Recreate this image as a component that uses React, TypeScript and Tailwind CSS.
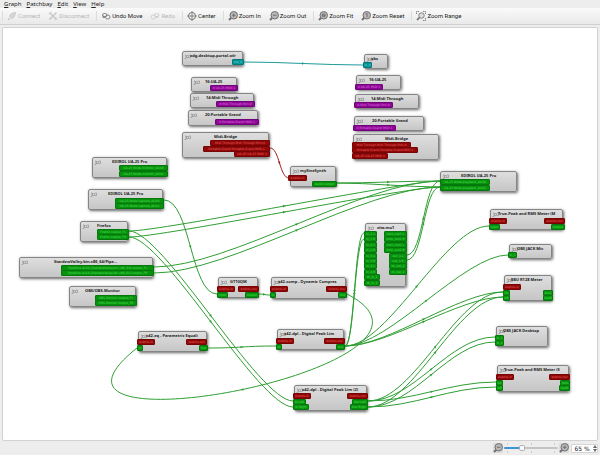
import React, { useState } from "react";

type Tone = "green" | "red" | "purple" | "teal";
type Port = [x: number, y: number, w: number, tone: Tone, label: string];
type GraphNode = {
  x: number;
  y: number;
  w: number;
  h: number;
  title: string;
  tx: number;
  ports: Port[];
};

const ORIGIN_X = 3;
const ORIGIN_Y = 28;

const toneClass: Record<Tone, string> = {
  green: "border-[#04780a] bg-[#08900e] text-[#4be050]",
  red: "border-[#780404] bg-[#900808] text-[#e86060]",
  purple: "border-[#70047a] bg-[#8c0892] text-[#e070e6]",
  teal: "border-[#04787a] bg-[#089092] text-[#60e0e0]",
};

const nodes: GraphNode[] = [
  { x: 182, y: 51, w: 61, h: 15, title: "xdg-desktop-portal-wlr", tx: 190, ports: [[232, 59, 12, "teal", "out_0"]] },
  { x: 364, y: 54, w: 24, h: 15, title: "obs", tx: 371, ports: [[363, 62, 9, "teal", "in_0"]] },
  { x: 191, y: 77, w: 46, h: 15, title: "16:UA-25", tx: 205, ports: [[210, 85, 28, "purple", "0:UA-25 MIDI 1"]] },
  { x: 190, y: 93, w: 64, h: 15, title: "14:Midi Through", tx: 206, ports: [[216, 101, 39, "purple", "0:Midi Through Port-0"]] },
  { x: 188, y: 110, w: 70, h: 16, title: "20:Portable Grand", tx: 205, ports: [[215, 119, 44, "purple", "0:Portable Grand MIDI 1"]] },
  {
    x: 182, y: 132, w: 87, h: 26, title: "Midi-Bridge", tx: 214,
    ports: [
      [210, 140, 60, "red", "Midi Through:Midi Through Port-0"],
      [203, 146, 67, "red", "Portable Grand:Portable Grand MIDI 1"],
      [234, 151, 36, "red", "UA-25:UA-25 MIDI 1"],
    ],
  },
  { x: 356, y: 75, w: 45, h: 15, title: "16:UA-25", tx: 369, ports: [[355, 84, 28, "purple", "0:UA-25 MIDI 1"]] },
  { x: 355, y: 94, w: 64, h: 15, title: "14:Midi Through", tx: 371, ports: [[354, 102, 39, "purple", "0:Midi Through Port-0"]] },
  { x: 354, y: 116, w: 70, h: 15, title: "20:Portable Grand", tx: 372, ports: [[353, 125, 43, "purple", "0:Portable Grand MIDI 1"]] },
  {
    x: 353, y: 134, w: 86, h: 26, title: "Midi-Bridge", tx: 385,
    ports: [
      [352, 142, 59, "red", "Midi Through:Midi Through Port-0"],
      [352, 147, 66, "red", "Portable Grand:Portable Grand MIDI 1"],
      [352, 153, 36, "red", "UA-25:UA-25 MIDI 1"],
    ],
  },
  {
    x: 440, y: 171, w: 77, h: 21, title: "EDIROL UA-25 Pro", tx: 461,
    ports: [
      [440, 179, 50, "green", "UA-25 Node:playback_AUX0"],
      [440, 185, 50, "green", "UA-25 Node:playback_AUX1"],
    ],
  },
  {
    x: 92, y: 157, w: 75, h: 21, title: "EDIROL UA-25 Pro", tx: 112,
    ports: [
      [119, 165, 49, "green", "UA-25 Node:monitor_AUX0"],
      [119, 171, 49, "green", "UA-25 Node:monitor_AUX1"],
    ],
  },
  {
    x: 88, y: 189, w: 75, h: 21, title: "EDIROL UA-25 Pro", tx: 108,
    ports: [
      [115, 198, 49, "green", "UA-25 Node:capture_AUX0"],
      [115, 203, 49, "green", "UA-25 Node:capture_AUX1"],
    ],
  },
  {
    x: 80, y: 221, w: 48, h: 21, title: "Firefox", tx: 97,
    ports: [
      [97, 229, 32, "green", "Firefox:output_FL"],
      [97, 234, 32, "green", "Firefox:output_FR"],
    ],
  },
  {
    x: 19, y: 257, w: 134, h: 21, title: "StardewValley.bin.x86_64/Pipe...", tx: 54,
    ports: [
      [61, 265, 93, "green", "PipeWire ALSA [StardewValley.bin.x86_64]:output_FL"],
      [61, 270, 93, "green", "PipeWire ALSA [StardewValley.bin.x86_64]:output_FR"],
    ],
  },
  {
    x: 69, y: 286, w: 67, h: 21, title: "OBS/OBS-Monitor", tx: 85,
    ports: [
      [95, 295, 42, "green", "OBS-Monitor:output_FL"],
      [95, 300, 42, "green", "OBS-Monitor:output_FR"],
    ],
  },
  {
    x: 290, y: 166, w: 46, h: 21, title: "mySineSynth", tx: 300,
    ports: [
      [288, 175, 19, "red", "events-in"],
      [312, 181, 25, "green", "Audio output"],
    ],
  },
  {
    x: 218, y: 277, w: 40, h: 21, title: "GT10QM", tx: 230,
    ports: [
      [217, 286, 18, "red", "events-in"],
      [238, 286, 21, "red", "events-out"],
      [217, 292, 11, "green", "Input"],
      [245, 292, 14, "green", "Output"],
    ],
  },
  {
    x: 271, y: 277, w: 75, h: 22, title: "x42-comp - Dynamic Compres", tx: 278,
    ports: [
      [270, 286, 18, "red", "events-in"],
      [326, 286, 21, "red", "events-out"],
      [270, 292, 6, "green", "In"],
      [338, 292, 9, "green", "Out"],
    ],
  },
  {
    x: 365, y: 223, w: 41, h: 64, title: "zita-mu1", tx: 377,
    ports: [
      [364, 231, 13, "green", "in_1.L"],
      [364, 236, 13, "green", "in_1.R"],
      [364, 242, 13, "green", "in_2.L"],
      [364, 247, 13, "green", "in_2.R"],
      [364, 253, 13, "green", "in_3.L"],
      [364, 258, 13, "green", "in_3.R"],
      [364, 263, 13, "green", "in_4.L"],
      [364, 269, 13, "green", "in_4.R"],
      [364, 274, 16, "green", "tb_in_1"],
      [364, 280, 16, "green", "tb_in_2"],
      [384, 231, 23, "green", "mon_out1.L"],
      [384, 236, 23, "green", "mon_out1.R"],
      [384, 242, 23, "green", "mon_out2.L"],
      [384, 247, 23, "green", "mon_out2.R"],
      [389, 253, 18, "green", "out_1.L"],
      [389, 258, 18, "green", "out_1.R"],
      [389, 263, 18, "green", "tb_out_1"],
      [389, 269, 18, "green", "tb_out_2"],
    ],
  },
  {
    x: 138, y: 331, w: 69, h: 21, title: "x42-eq - Parametric Equali", tx: 146,
    ports: [
      [137, 339, 18, "red", "events-in"],
      [186, 339, 21, "red", "events-out"],
      [137, 345, 6, "green", "In"],
      [199, 345, 9, "green", "Out"],
    ],
  },
  {
    x: 277, y: 329, w: 67, h: 21, title: "x42-dpl - Digital Peak Lim", tx: 284,
    ports: [
      [276, 338, 18, "red", "events-in"],
      [324, 338, 21, "red", "events-out"],
      [276, 344, 6, "green", "In"],
      [336, 344, 9, "green", "Out"],
    ],
  },
  {
    x: 294, y: 385, w: 73, h: 26, title: "x42-dpl - Digital Peak Lim (2)", tx: 302,
    ports: [
      [293, 393, 18, "red", "events-in"],
      [347, 393, 21, "red", "events-out"],
      [293, 399, 13, "green", "In Left"],
      [293, 404, 16, "green", "In Right"],
      [352, 399, 16, "green", "Out Left"],
      [350, 404, 18, "green", "Out Right"],
    ],
  },
  {
    x: 490, y: 209, w: 73, h: 21, title: "True-Peak and RMS Meter (M", tx: 498,
    ports: [
      [489, 218, 18, "red", "events-in"],
      [544, 218, 21, "red", "events-out"],
      [489, 224, 11, "green", "Input"],
      [551, 224, 14, "green", "Output"],
    ],
  },
  { x: 509, y: 244, w: 43, h: 15, title: "OBS JACK Mic", tx: 517, ports: [[508, 252, 9, "green", "in_1"]] },
  {
    x: 504, y: 275, w: 48, h: 26, title: "EBU R128 Meter", tx: 511,
    ports: [
      [503, 284, 18, "red", "events-in"],
      [503, 290, 7, "green", "InL"],
      [503, 295, 7, "green", "InR"],
      [543, 290, 10, "green", "OutL"],
      [543, 295, 10, "green", "OutR"],
    ],
  },
  {
    x: 496, y: 326, w: 52, h: 21, title: "OBS JACK Desktop", tx: 503,
    ports: [
      [495, 335, 9, "green", "in_1"],
      [495, 340, 9, "green", "in_2"],
    ],
  },
  {
    x: 497, y: 365, w: 72, h: 27, title: "True-Peak and RMS Meter (S", tx: 504,
    ports: [
      [496, 374, 18, "red", "events-in"],
      [549, 374, 21, "red", "events-out"],
      [496, 380, 7, "green", "InL"],
      [496, 385, 7, "green", "InR"],
      [560, 380, 10, "green", "OutL"],
      [559, 385, 11, "green", "OutR"],
    ],
  },
];

type Point = [number, number];
type Wire = { p: [Point, Point, Point, Point]; color: string };

const GREEN = "#2f9e33";

function link(x0: number, y0: number, x1: number, y1: number, reach: number, color = GREEN): Wire {
  const d = 0.5 * Math.min(reach, Math.abs(x1 - x0));
  return { p: [[x0, y0], [x0 + d, y0], [x1 - d, y1], [x1, y1]], color };
}

const wires: Wire[] = [
  link(244, 62, 363, 65, 80, "#1f9a9a"),
  link(270, 148, 289, 178, 60, "#a02020"),
  link(337, 183, 440, 181, 66),
  link(337, 183, 440, 187, 66),
  link(129, 231, 440, 181, 68),
  link(129, 237, 440, 187, 68),
  link(129, 231, 293, 401, 68),
  link(129, 237, 293, 407, 68),
  link(154, 267, 440, 181, 150),
  link(154, 273, 440, 187, 150),
  link(164, 200, 217, 294, 95),
  link(259, 294, 270, 295, 60),
  link(208, 348, 276, 346, 80),
  link(345, 346, 364, 233, 87),
  link(345, 346, 364, 239, 87),
  link(345, 346, 489, 226, 87),
  link(345, 346, 508, 255, 87),
  link(345, 346, 503, 292, 87),
  link(345, 346, 503, 297, 87),
  link(407, 255, 440, 181, 61),
  link(407, 260, 440, 187, 61),
  link(368, 401, 503, 292, 93),
  link(368, 407, 503, 297, 93),
  link(368, 401, 495, 337, 93),
  link(368, 407, 495, 342, 93),
  link(368, 401, 496, 382, 93),
  link(368, 407, 496, 387, 93),
  { p: [[347, 294], [487, 366], [-3, 459], [137, 348]], color: GREEN },
];

function WirePath({ wire }: { wire: Wire }) {
  const [a, b, c, d] = wire.p;
  const mx = (a[0] + 3 * b[0] + 3 * c[0] + d[0]) / 8;
  const my = (a[1] + 3 * b[1] + 3 * c[1] + d[1]) / 8;
  const angle = (Math.atan2(d[1] + c[1] - b[1] - a[1], d[0] + c[0] - b[0] - a[0]) * 180) / Math.PI;
  return (
    <g stroke={wire.color} strokeWidth="1" fill="none">
      <path d={`M${a} C${b} ${c} ${d}`} />
      <path d="M-1.5 -1.2L1.5 0L-1.5 1.2Z" fill={wire.color} stroke="none" transform={`translate(${mx} ${my}) rotate(${angle})`} />
    </g>
  );
}

function NodeBox({ node }: { node: GraphNode }) {
  return (
    <div
      className="absolute rounded-[2px] border border-[#858585] bg-linear-to-b from-[#dedede] to-[#c6c6c6] shadow-[1px_1px_3px_rgba(0,0,0,0.6)]"
      style={{ left: node.x - ORIGIN_X, top: node.y - ORIGIN_Y, width: node.w, height: node.h }}
    >
      <svg className="absolute left-px top-[2px] h-[5px] w-[7px]" viewBox="0 0 14 10" fill="none" stroke="#888" strokeWidth="1.2">
        <path d="M1 9H4V2H2M5 3H9V7H5ZM10 2H13V7H10" />
      </svg>
      <span
        className="absolute top-px font-['Noto_Sans',sans-serif] text-[4px] leading-[5px] font-bold whitespace-nowrap text-[#1c1c1c]"
        style={{ left: node.tx - node.x - 1 }}
      >
        {node.title}
      </span>
      {node.ports.map(([x, y, w, tone, label]) => (
        <span
          key={`${x}-${y}`}
          className={`absolute flex h-[6px] items-center justify-center rounded-[1px] border text-[3px] leading-[4px] whitespace-nowrap ${toneClass[tone]}`}
          style={{ left: x - node.x - 1, top: y - node.y - 1, width: w }}
        >
          {label}
        </span>
      ))}
    </div>
  );
}

type IconName = "connect" | "disconnect" | "undo" | "redo" | "center" | "in" | "out" | "fit" | "reset" | "range";

function ToolIcon({ name }: { name: IconName }) {
  const zoom = name === "in" || name === "out" || name === "fit" || name === "reset";
  return (
    <svg className="size-[10px] shrink-0" viewBox="0 0 20 20" fill="none" stroke="#707070" strokeWidth="2">
      {name === "connect" && (
        <g>
          <path d="M2 18L6 14" strokeWidth="3" />
          <path d="M5 10L10 15L15 11L17 3L9 5Z" fill="#999" />
          <path d="M14 6L18 2" />
        </g>
      )}
      {name === "disconnect" && (
        <g strokeWidth="3.4">
          <path d="M3 3L17 17M17 3L3 17" />
          <path d="M1 7L7 1M13 19L19 13" strokeWidth="1.6" />
        </g>
      )}
      {name === "undo" && (
        <g strokeWidth="1.6">
          <rect x="3" y="5" width="9" height="6" rx="3" />
          <rect x="9" y="8" width="9" height="8" rx="4" />
          <path d="M4 9V13H8" />
        </g>
      )}
      {name === "redo" && (
        <g strokeWidth="1.6">
          <rect x="9" y="5" width="9" height="6" rx="3" />
          <rect x="2" y="8" width="9" height="8" rx="4" />
          <path d="M16 9V13H12" />
        </g>
      )}
      {name === "center" && (
        <g>
          <circle cx="10" cy="10" r="7" />
          <circle cx="10" cy="10" r="2.4" />
          <path d="M10 0V5M10 15V20M0 10H5M15 10H20" strokeWidth="1.6" />
        </g>
      )}
      {zoom && (
        <g>
          <circle cx="11.5" cy="8.5" r="7.5" fill="#b8b8b8" />
          <path d="M6 14L2 18" strokeWidth="4" />
          {name !== "reset" && <path d="M8 8.5H15" />}
          {name === "in" && <path d="M11.5 5V12" />}
          {name === "fit" && <circle cx="11.5" cy="8.5" r="3" />}
          {name === "reset" && <path d="M9.5 6.5L12 4.5V12.5" />}
        </g>
      )}
      {name === "range" && (
        <g strokeWidth="1.7">
          <path d="M1 6V1H6M14 1H19V6M19 14V19H14" strokeDasharray="3 1" />
          <circle cx="11" cy="9" r="5.5" fill="#ddd" />
          <path d="M7 13L2 18" strokeWidth="3.4" />
        </g>
      )}
    </svg>
  );
}

type Tool = { icon: IconName; label: string; off?: boolean };
const toolGroups: Tool[][] = [
  [
    { icon: "connect", label: "Connect", off: true },
    { icon: "disconnect", label: "Disconnect", off: true },
  ],
  [
    { icon: "undo", label: "Undo Move" },
    { icon: "redo", label: "Redo", off: true },
  ],
  [{ icon: "center", label: "Center" }],
  [
    { icon: "in", label: "Zoom In" },
    { icon: "out", label: "Zoom Out" },
  ],
  [
    { icon: "fit", label: "Zoom Fit" },
    { icon: "reset", label: "Zoom Reset" },
  ],
  [{ icon: "range", label: "Zoom Range" }],
];

export default function App() {
  const [zoom, setZoom] = useState(65);
  const pct = ((zoom - 10) / 180) * 100;
  return (
    <div className="flex min-h-screen flex-col bg-[#ededed] font-['Noto_Sans',sans-serif] text-[6px] leading-[8px] text-[#222]">
      <nav className="flex h-2 items-center gap-[5px] pl-1">
        {["Graph", "Patchbay", "Edit", "View", "Help"].map((m) => (
          <button key={m} type="button" className="first-letter:underline">
            {m}
          </button>
        ))}
      </nav>
      <div className="flex h-[17px] items-center border-b border-[#d0d0d0] bg-linear-to-b from-[#fafafa] to-[#e9e9e9] pl-[2px] font-[Roboto,sans-serif]">
        {toolGroups.map((group, i) => (
          <div key={i} className="mr-[3px] flex items-center border-l border-[#dcdcdc]">
            {group.map((t) => (
              <button
                key={t.label}
                type="button"
                disabled={t.off}
                className="flex items-center gap-px px-1 whitespace-nowrap disabled:opacity-30"
              >
                <ToolIcon name={t.icon} />
                {t.label}
              </button>
            ))}
          </div>
        ))}
      </div>
      <main className="relative mx-[2px] mt-[2px] min-h-[414px] flex-1 overflow-hidden rounded-[2px] border border-[#d2d2d2] bg-white font-['DejaVu_Sans',sans-serif]">
        {nodes.map((n) => (
          <NodeBox key={`${n.x}-${n.y}`} node={n} />
        ))}
        <svg className="pointer-events-none absolute inset-0 size-full">
          <g transform={`translate(${-ORIGIN_X} ${-ORIGIN_Y})`}>
            {wires.map((w, i) => (
              <WirePath key={i} wire={w} />
            ))}
          </g>
        </svg>
      </main>
      <footer className="flex h-[14px] items-center justify-end gap-px pr-[2px]">
        <button type="button" aria-label="Zoom out" className="rounded-[1px] bg-[#dcdcdc]" onClick={() => setZoom(Math.max(10, zoom - 5))}>
          <ToolIcon name="out" />
        </button>
        <div className="relative flex h-[10px] w-[54px] flex-col justify-between">
          <div className="flex h-[2px] justify-between px-[3px]">
            <i className="w-px bg-[#ccc]" />
            <i className="w-px bg-[#ccc]" />
            <i className="w-px bg-[#ccc]" />
          </div>
          <input
            type="range"
            aria-label="Zoom"
            min={10}
            max={190}
            value={zoom}
            onChange={(e) => setZoom(Number(e.target.value))}
            className="h-[2px] w-full appearance-none rounded-full bg-[#c4c4c4] [&::-webkit-slider-thumb]:size-[6px] [&::-webkit-slider-thumb]:appearance-none [&::-webkit-slider-thumb]:rounded-[2px] [&::-webkit-slider-thumb]:border [&::-webkit-slider-thumb]:border-[#b0b0b0] [&::-webkit-slider-thumb]:bg-white"
            style={{ backgroundImage: `linear-gradient(to right, #3c96d6 ${pct}%, #c4c4c4 ${pct}%)` }}
          />
          <div className="flex h-[2px] justify-between px-[3px]">
            <i className="w-px bg-[#ccc]" />
            <i className="w-px bg-[#ccc]" />
            <i className="w-px bg-[#ccc]" />
          </div>
        </div>
        <button type="button" aria-label="Zoom in" className="rounded-[1px] bg-[#dcdcdc]" onClick={() => setZoom(Math.min(190, zoom + 5))}>
          <ToolIcon name="in" />
        </button>
        <div className="ml-px flex h-[9px] items-center rounded-[1px] border border-[#d4d4d4] bg-white">
          <input
            aria-label="Zoom level"
            readOnly
            value={`${zoom} %`}
            className="w-[20px] bg-transparent text-center font-['DejaVu_Sans',sans-serif] text-[6px] leading-[7px] outline-none"
          />
          <div className="flex w-[5px] flex-col items-center gap-px">
            <button type="button" aria-label="Increase" className="border-x-2 border-b-[3px] border-x-transparent border-b-[#666]" />
            <button type="button" aria-label="Decrease" className="border-x-2 border-t-[3px] border-x-transparent border-t-[#666]" />
          </div>
        </div>
      </footer>
    </div>
  );
}
